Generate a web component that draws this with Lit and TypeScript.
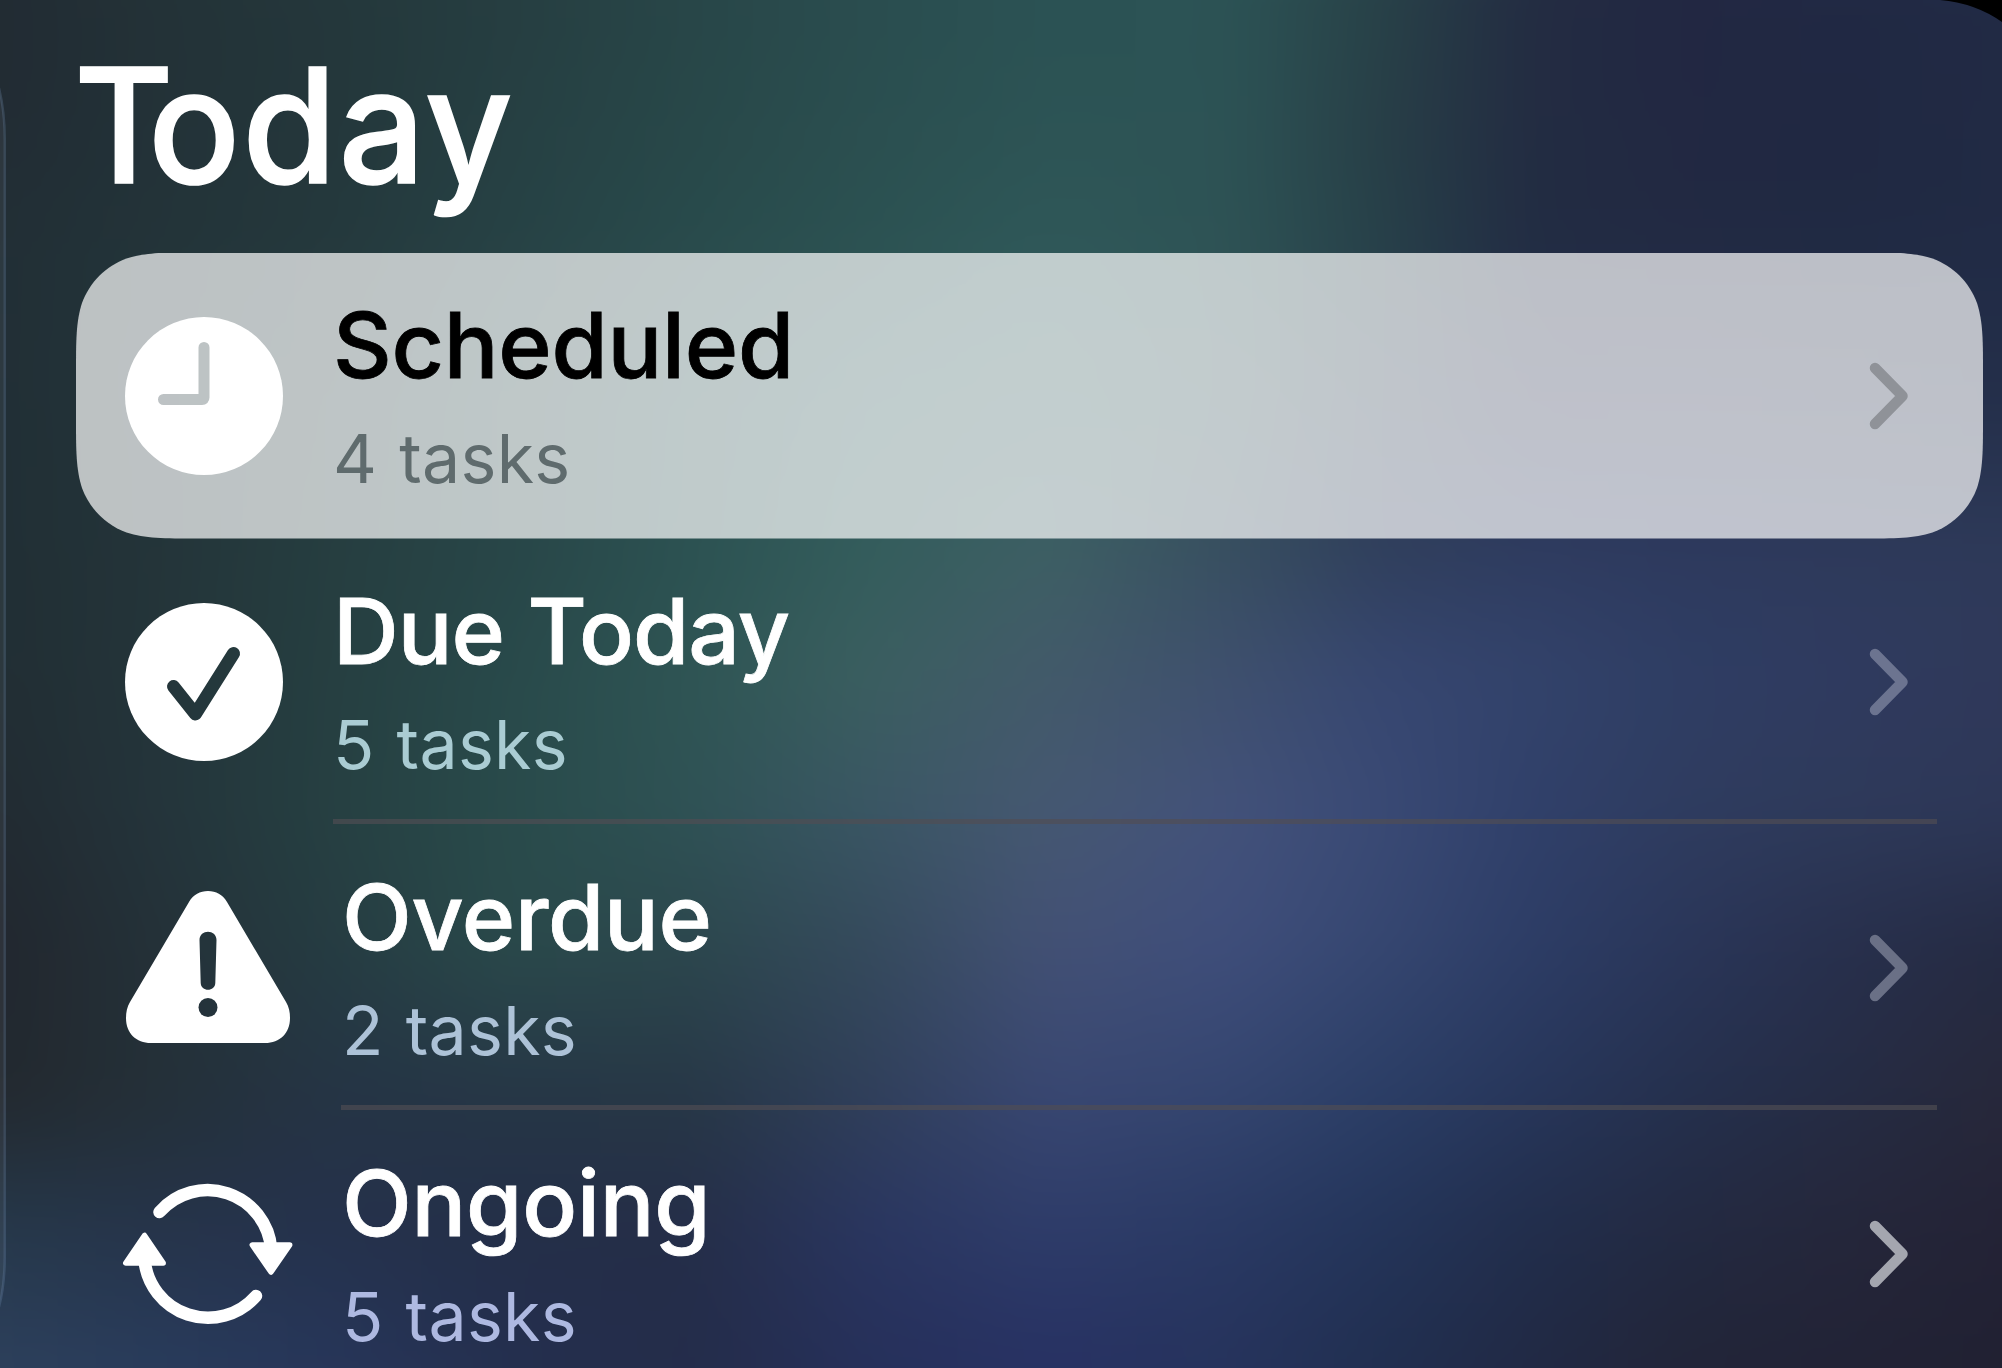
import { LitElement, html, svg, css } from "lit";
import { customElement, property } from "lit/decorators.js";
import { styleMap } from "lit/directives/style-map.js";

type IconName = "clock" | "check" | "warning" | "cycle";

interface TaskGroup {
  title: string;
  count: string;
  icon: IconName;
}

const GROUPS: TaskGroup[] = [
  { title: "Scheduled", count: "4 tasks", icon: "clock" },
  { title: "Due Today", count: "5 tasks", icon: "check" },
  { title: "Overdue", count: "2 tasks", icon: "warning" },
  { title: "Ongoing", count: "5 tasks", icon: "cycle" },
];

// Colour mesh of the wallpaper: column stops and rows, in a 1568 x 1071 space.
const MESH_SCALE = 2002 / 1568;
const BLEED = 90;
const COLS = [0, 120, 260, 400, 540, 680, 820, 960, 1080, 1200, 1320, 1440, 1568];
const ROWS: [number, string][] = [
  [0, "222b33 233237 24373b 263e41 284648 2a4d4f 2b5254 2c5355 284248 232c42 222742 212944 212a45"],
  [100, "222c34 233238 24373b 264043 284849 2b4f50 2d5455 2d5355 283f47 232c42 222842 202842 212a44"],
  [190, "222f36 233439 25393d 274245 294b4c 2c5252 2f5859 2e5355 274149 222c43 222a43 202a43 212b45"],
  [310, "222f36 23353a 263c40 284748 2c5152 305a5b 345d5f 355459 2e4053 28304f 28314f 27314c 242f4a"],
  [430, "212f35 243439 263e40 284648 2c5252 345d5c 3e6064 384f60 303f5c 2f3c60 2e3a5e 2e3a5b 2e3a59"],
  [530, "222e34 24353a 263f41 294a4b 2f5554 3b5f60 435a6a 3f506e 374771 33436b 2f3e64 303b60 30395a"],
  [640, "222b32 24343b 264042 294b4b 2f5255 3a5664 465872 43527b 3a4a75 30406a 2f3c5f 2e3a5a 2d3757"],
  [740, "22272f 243138 263c42 2a4a4b 2c474d 354a5c 435175 3f4e7b 364771 2d3d66 2a3659 28304d 252b43"],
  [860, "23292f 243038 253445 263646 273746 303f5a 394772 34456f 2b3e66 27365a 25304d 252c44 27283a"],
  [960, "26384a 26344a 25324c 242f48 252e48 2a3660 2f3d6a 2a3a64 24355a 222e4c 232a42 25273b 242336"],
  [1071, "2d405c 293c5c 27365a 242f4f 242c4a 26305a 273163 26335c 212f50 212944 222538 222336 212132"],
];

@customElement("mesh-backdrop")
export class MeshBackdrop extends LitElement {
  static styles = css`
    :host {
      display: grid;
      filter: blur(30px);
    }
    .layer {
      grid-area: 1 / 1;
    }
  `;

  render() {
    const px = (v: number) => `${(v * MESH_SCALE + BLEED).toFixed(1)}px`;
    return ROWS.map(([y, colours], i) => {
      const stops = colours
        .split(" ")
        .map((c, k) => `#${c} ${px(COLS[k])}`)
        .join(", ");
      const mask =
        i === 0
          ? "none"
          : `linear-gradient(to bottom, transparent ${px(ROWS[i - 1][0])}, #000 ${px(y)})`;
      return html`<div
        class="layer"
        style=${styleMap({
          backgroundImage: `linear-gradient(to right, ${stops})`,
          maskImage: mask,
        })}
      ></div>`;
    });
  }
}

@customElement("group-icon")
export class GroupIcon extends LitElement {
  @property() name: IconName = "clock";

  static styles = css`
    :host {
      display: block;
    }
    svg {
      display: block;
      overflow: visible;
    }
  `;

  private glyph() {
    switch (this.name) {
      case "clock":
        return svg`
          <mask id="cut" maskUnits="userSpaceOnUse" x="0" y="0" width="180" height="160">
            <rect width="180" height="160" fill="#fff"/>
            <path d="M79 30.500V80.500Q79 82.500 77 82.500H38.500" fill="none" stroke="#000" stroke-width="11" stroke-linecap="round" stroke-linejoin="round"/>
          </mask>
          <circle cx="79" cy="79" r="79" fill="#fff" mask="url(#cut)"/>`;
      case "check":
        return svg`
          <mask id="cut" maskUnits="userSpaceOnUse" x="0" y="0" width="180" height="160">
            <rect width="180" height="160" fill="#fff"/>
            <path d="M48.500 83.500L70.400 111L108.500 50.500" fill="none" stroke="#000" stroke-width="13" stroke-linecap="round" stroke-linejoin="round"/>
          </mask>
          <circle cx="79" cy="79" r="79" fill="#fff" mask="url(#cut)"/>`;
      case "warning":
        return svg`
          <mask id="cut" maskUnits="userSpaceOnUse" x="0" y="0" width="180" height="160">
            <rect width="180" height="160" fill="#fff"/>
            <path d="M74.500 51C74.500 40 91.500 40 91.500 51L90.300 94C90.100 103 75.900 103 75.700 94Z" fill="#000"/>
            <circle cx="83" cy="118.500" r="9.500" fill="#000"/>
          </mask>
          <path d="M83 2C91 2 97.500 5.500 102 13L161 113C164 118 165 123 165 129C165 144 155 154 140 154H26C11 154 1 144 1 129C1 123 2 118 5 113L64 13C68.500 5.500 75 2 83 2Z" fill="#fff" mask="url(#cut)"/>`;
      default:
        return svg`
          <g fill="none" stroke="#fff" stroke-width="12.500" stroke-linecap="round">
            <path d="M34.500 37A63.800 63.800 0 0 1 146.200 74"/>
            <path d="M19.400 84A63.800 63.800 0 0 0 131 121"/>
          </g>
          <g fill="#fff" stroke="#fff" stroke-width="5.500" stroke-linejoin="round">
            <path d="M127.300 70H164.700L146 97Z"/>
            <path d="M0.800 88H38.200L19.500 60.500Z"/>
          </g>`;
    }
  }

  render() {
    return html`<svg width="166" height="158" viewBox="0 0 166 158">${this.glyph()}</svg>`;
  }
}

@customElement("group-row")
export class GroupRow extends LitElement {
  @property({ attribute: false }) group!: TaskGroup;

  static styles = css`
    :host {
      display: block;
      height: 286px;
    }
    .row {
      box-sizing: border-box;
      height: 100%;
      display: flex;
      padding-left: 48.500px;
    }
    .icon {
      flex: none;
      width: 208.500px;
      display: flex;
      align-items: center;
    }
    .wide {
      width: 216.500px;
    }
    .body {
      box-sizing: border-box;
      flex: 1;
      margin-right: 46px;
      display: flex;
      justify-content: space-between;
      align-items: center;
      padding-right: 27px;
    }
    .divided {
      border-bottom: 5px solid rgba(80, 77, 84, 0.66);
      margin-bottom: 1px;
    }
    .texts {
      align-self: flex-start;
      padding-top: 47px;
      white-space: nowrap;
    }
    .wide + .body .texts {
      padding-left: 1px;
    }
    .title {
      font-size: 91px;
      line-height: 91px;
      font-weight: 500;
      color: #fff;
      -webkit-text-stroke: 0.800px currentColor;
    }
    .count {
      margin-top: 33px;
      font-size: 68px;
      line-height: 68px;
      font-weight: 400;
      letter-spacing: 0.300px;
      word-spacing: 2.500px;
    }
    .clock .title { color: #000; letter-spacing: -0.250px; }
    .check .title { letter-spacing: -0.900px; }
    .warning .title { letter-spacing: -0.300px; }
    .cycle .title { letter-spacing: -0.200px; }
    .clock .count { color: #5f6b6d; }
    .check .count { color: #aaccd3; }
    .warning .count { color: #adc2d7; }
    .cycle .count { color: #aeb9e1; }
    .chevron {
      flex: none;
      display: block;
    }
    .clock .chevron { stroke: #8f9298; }
    .check .chevron { stroke: #6c7490; }
    .warning .chevron { stroke: #6a7086; }
    .cycle .chevron { stroke: #a4a6af; }
    .divided .chevron { margin-top: 6px; }
  `;

  render() {
    const { title, count, icon } = this.group;
    const wide = icon === "warning" || icon === "cycle";
    const divided = icon === "check" || icon === "warning";
    return html`<div class="row ${icon}">
      <div class="icon ${wide ? "wide" : ""}"><group-icon .name=${icon}></group-icon></div>
      <div class="body ${divided ? "divided" : ""}">
        <div class="texts">
          <div class="title">${title}</div>
          <div class="count">${count}</div>
        </div>
        <svg class="chevron" width="42" height="70" viewBox="0 0 42 70" fill="none" stroke-width="10.500" stroke-linecap="round" stroke-linejoin="round">
          <path d="M7 7L34.500 35L7 63"/>
        </svg>
      </div>
    </div>`;
  }
}

// Continuous-curvature rounded rectangle.
function squircle(w: number, h: number, r: number): string {
  const a = 1.528665 * r, b = 1.088493 * r, c = 0.868407 * r, d = 0.631494 * r;
  const e = 0.372824 * r, f = 0.16906 * r, g = 0.074911 * r;
  return [
    `M${a} 0H${w - a}`,
    `C${w - b} 0 ${w - c} 0 ${w - d} ${g}C${w - e} ${f} ${w - f} ${e} ${w - g} ${d}C${w} ${c} ${w} ${b} ${w} ${a}`,
    `V${h - a}`,
    `C${w} ${h - b} ${w} ${h - c} ${w - g} ${h - d}C${w - f} ${h - e} ${w - e} ${h - f} ${w - d} ${h - g}C${w - c} ${h} ${w - b} ${h} ${w - a} ${h}`,
    `H${a}`,
    `C${b} ${h} ${c} ${h} ${d} ${h - g}C${e} ${h - f} ${f} ${h - e} ${g} ${h - d}C0 ${h - c} 0 ${h - b} 0 ${h - a}`,
    `V${a}`,
    `C0 ${b} 0 ${c} ${g} ${d}C${f} ${e} ${e} ${f} ${d} ${g}C${c} 0 ${b} 0 ${a} 0Z`,
  ].join("");
}

@customElement("app-root")
export class AppRoot extends LitElement {
  static styles = css`
    :host {
      display: block;
      position: relative;
      width: 2002px;
      height: 1368px;
      overflow: hidden;
      background: #26353f;
      font-family: Inter, "Liberation Sans", sans-serif;
    }
    .backdrop {
      position: absolute;
      inset: -90px;
    }
    .edges {
      position: absolute;
      inset: 0;
    }
    .panel {
      position: relative;
      display: flex;
      flex-direction: column;
      padding: 45px 19px 0 76px;
    }
    .heading {
      margin: 0 0 47.500px -2px;
      font-size: 160px;
      line-height: 160px;
      font-weight: 500;
      letter-spacing: 2px;
      color: #fff;
      -webkit-text-stroke: 1.600px #fff;
      transform: scaleX(0.955);
      transform-origin: left;
    }
    .initial {
      letter-spacing: -27px;
    }
    .selected {
      background: rgba(255, 255, 255, 0.7);
    }
  `;

  render() {
    return html`
      <mesh-backdrop class="backdrop"></mesh-backdrop>
      <svg class="edges" width="2002" height="1368" viewBox="0 0 2002 1368">
        <path d="M0 92Q4.500 112 4.500 140V1255Q4.500 1285 0 1303Z" fill="#fff" fill-opacity="0.050"/>
        <path d="M-1 88Q4.800 112 4.800 140V1255Q4.800 1285 -1 1307" fill="none" stroke="#7fa0c8" stroke-opacity="0.220" stroke-width="2.500"/>
        <path d="M1940 0Q1975 3 2002 22V0Z" fill="#000"/>
      </svg>
      <main class="panel">
        <h1 class="heading"><span class="initial">T</span>oday</h1>
        ${GROUPS.map(
          (g, i) => html`<group-row
            class=${i === 0 ? "selected" : ""}
            style=${i === 0 ? styleMap({ clipPath: `path("${squircle(1907, 286, 80)}")` }) : ""}
            .group=${g}
          ></group-row>`
        )}
      </main>
    `;
  }
}
